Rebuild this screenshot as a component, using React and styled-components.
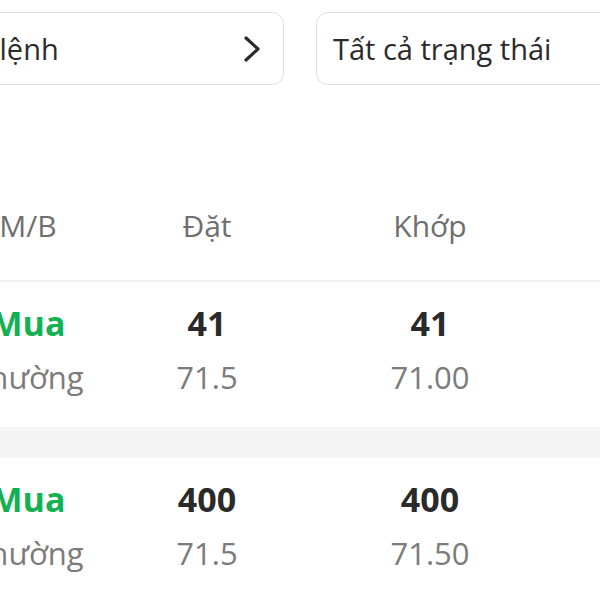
import React from "react";
import styled, { createGlobalStyle } from "styled-components";

const Global = createGlobalStyle`
  html, body { margin: 0; padding: 0; background: #ffffff; }
  body { font-family: "Open Sans", "Noto Sans", sans-serif; }
`;

const Viewport = styled.div`
  width: 600px;
  height: 600px;
  overflow: hidden;
  background: #fff;
`;

const Page = styled.div`
  width: 760px;
  margin-left: -77px;
`;

const Filters = styled.div`
  display: grid;
  grid-template-columns: 361px 361px;
  column-gap: 32px;
  padding-top: 12px;
`;

const FilterBox = styled.div`
  box-sizing: border-box;
  height: 73px;
  border: 1px solid #dedede;
  border-radius: 12px;
  padding: 0 22px 0 ${(p) => p.$pad || 17}px;
  display: flex;
  align-items: center;
  justify-content: space-between;
  font-size: 29px;
  color: #2b2b2b;
`;

const Chevron = () => (
  <svg width="18" height="26" viewBox="0 0 18 26" fill="none">
    <polyline
      points="3,2 15,13 3,24"
      stroke="#2b2b2b"
      strokeWidth="3.2"
      strokeLinecap="round"
      strokeLinejoin="round"
    />
  </svg>
);

const Grid = styled.div`
  display: grid;
  grid-template-columns: 210px 148px 298px 1fr;
`;

const HeaderRow = styled(Grid)`
  padding-top: 121px;
  padding-bottom: 34px;
  border-bottom: 2px solid #f0f0f0;
`;

const HeadCell = styled.div`
  text-align: center;
  font-size: 30px;
  line-height: 40px;
  color: #6f6f6f;
`;

const Row = styled(Grid)`
  padding-top: 19px;
  padding-bottom: 30px;
  row-gap: 12px;
`;

const Main = styled.div`
  text-align: center;
  font-size: 34px;
  line-height: 44px;
  font-weight: 700;
  color: ${(p) => (p.$buy ? "#14b153" : "#2a2a2a")};
`;

const Sub = styled.div`
  text-align: center;
  font-size: 31px;
  line-height: 40px;
  color: #7b7b7b;
`;

const Spacer = styled.div``;

const Separator = styled.div`
  height: 31px;
  background: #f4f4f4;
`;

const orders = [
  { side: "Mua", type: "Thường", qty: "41", price: "71.5", matchQty: "41", matchPrice: "71.00" },
  { side: "Mua", type: "Thường", qty: "400", price: "71.5", matchQty: "400", matchPrice: "71.50" },
];

export default function App() {
  return (
    <Viewport>
      <Global />
      <Page>
        <Filters>
          <FilterBox $pad={12}>
            <span>Loại lệnh</span>
            <Chevron />
          </FilterBox>
          <FilterBox $pad={16}>
            <span>Tất cả trạng thái</span>
          </FilterBox>
        </Filters>
        <HeaderRow>
          <HeadCell>M/B</HeadCell>
          <HeadCell>Đặt</HeadCell>
          <HeadCell>Khớp</HeadCell>
          <Spacer />
        </HeaderRow>
        {orders.map((o, i) => (
          <React.Fragment key={i}>
            {i > 0 && <Separator />}
            <Row>
              <Main $buy>{o.side}</Main>
              <Main>{o.qty}</Main>
              <Main>{o.matchQty}</Main>
              <Spacer />
              <Sub>{o.type}</Sub>
              <Sub>{o.price}</Sub>
              <Sub>{o.matchPrice}</Sub>
              <Spacer />
            </Row>
          </React.Fragment>
        ))}
      </Page>
    </Viewport>
  );
}
